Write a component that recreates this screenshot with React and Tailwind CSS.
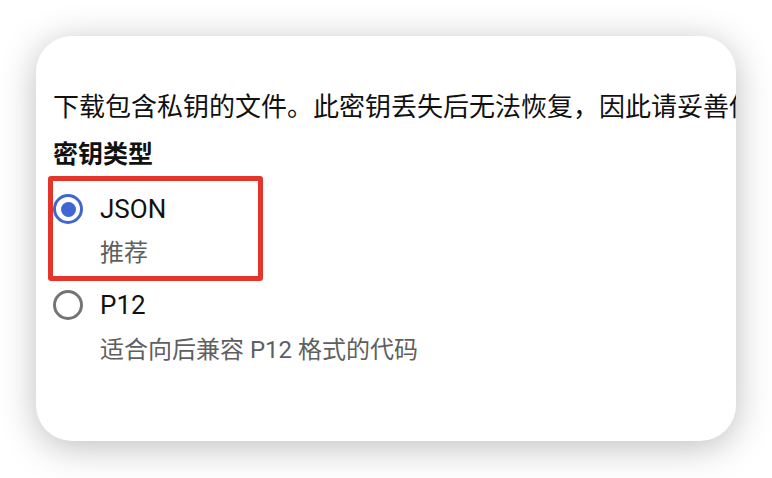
import React from "react";

function Radio({ checked }) {
  if (checked) {
    return (
      <div className="w-[30px] h-[30px] rounded-full border-[3px] border-[#4066d4] flex items-center justify-center shrink-0">
        <div className="w-[15px] h-[15px] rounded-full bg-[#4066d4]" />
      </div>
    );
  }
  return <div className="w-[30px] h-[30px] rounded-full border-[3px] border-[#747474] shrink-0" />;
}

export default function App() {
  return (
    <div
      className="w-[772px] h-[478px] bg-white overflow-hidden pt-[36px] pl-[36px]"
      style={{ fontFamily: "Roboto, 'Noto Sans CJK SC', sans-serif" }}
    >
      <div className="relative w-[700px] h-[405px] bg-white rounded-[36px] overflow-hidden shadow-[0_6px_36px_rgba(0,0,0,0.26)] pt-[53px] pl-[17px]">
        <div className="whitespace-nowrap text-[26px] leading-[36px] text-[#111]">
          下载包含私钥的文件。此密钥丢失后无法恢复，因此请妥善保管此文件。
        </div>
        <div className="mt-[12px] text-[25px] leading-[36px] font-bold text-[#111]">密钥类型</div>
        <div className="mt-[18px] flex items-center h-[36px] gap-[17px]">
          <Radio checked />
          <span className="text-[26px] text-[#111]">JSON</span>
        </div>
        <div className="mt-[9px] pl-[47px] text-[24px] leading-[34px] text-[#5f5f5f]">推荐</div>
        <div className="mt-[17px] flex items-center h-[36px] gap-[17px]">
          <Radio />
          <span className="text-[26px] text-[#111]">P12</span>
        </div>
        <div className="mt-[10px] pl-[47px] text-[24px] leading-[34px] text-[#5f5f5f]">
          适合向后兼容 P12 格式的代码
        </div>
        <div className="absolute left-[12px] top-[140px] w-[215px] h-[105px] border-[5px] border-[#e5352a] rounded-[3px]" />
      </div>
    </div>
  );
}
